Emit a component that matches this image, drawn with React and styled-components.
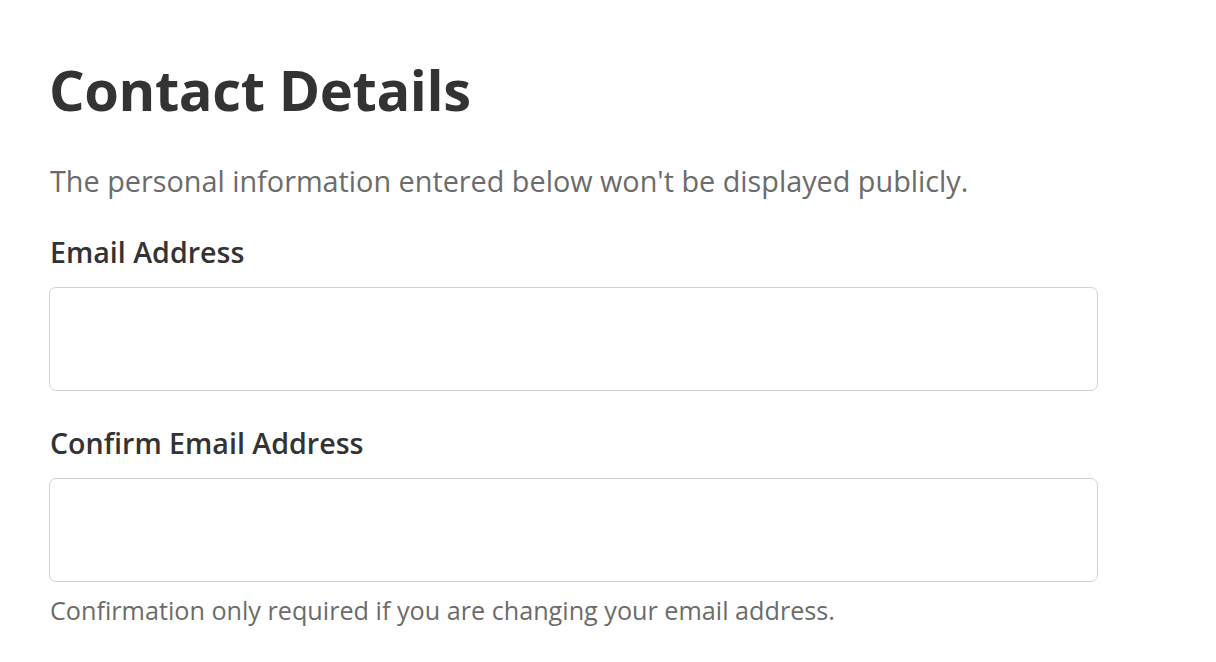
import React from 'react';
import styled, { createGlobalStyle } from 'styled-components';

const GlobalStyle = createGlobalStyle`
  body {
    margin: 0;
    background: #fff;
    font-family: 'Open Sans', 'Liberation Sans', sans-serif;
  }
`;

const Page = styled.div`
  display: flex;
  flex-direction: column;
  padding: 51px 0 0 49px;
  width: 1050px;
`;

const Title = styled.h1`
  margin: 0;
  font-size: 56px;
  line-height: 76px;
  font-weight: 700;
  color: #333;
  letter-spacing: -0.4px;
`;

const Intro = styled.p`
  margin: 34px 0 0 1px;
  font-size: 28.8px;
  line-height: 40px;
  color: #6b6b6b;
`;

const Field = styled.div`
  display: flex;
  flex-direction: column;
  margin-top: ${(props) => props.gap || '24px'};
`;

const Label = styled.label`
  margin-left: 1px;
  font-size: 28.6px;
  line-height: 40px;
  font-weight: 600;
  color: #333;
`;

const Input = styled.input`
  box-sizing: border-box;
  margin-top: 15px;
  width: 1049px;
  height: 104px;
  border: 1px solid #d2d2d2;
  border-radius: 7px;
  padding: 0 20px;
  font: inherit;
  font-size: 28px;
  outline: none;
`;

const Hint = styled.p`
  margin: 11px 0 0 1px;
  font-size: 25.2px;
  line-height: 34px;
  color: #6b6b6b;
`;

export default function App() {
  return (
    <>
      <GlobalStyle />
      <Page>
        <Title>Contact Details</Title>
        <Intro>The personal information entered below won't be displayed publicly.</Intro>
        <Field gap='31px'>
          <Label htmlFor='email'>Email Address</Label>
          <Input id='email' type='email' />
        </Field>
        <Field gap='32px'>
          <Label htmlFor='confirm'>Confirm Email Address</Label>
          <Input id='confirm' type='email' />
        </Field>
        <Hint>Confirmation only required if you are changing your email address.</Hint>
      </Page>
    </>
  );
}
